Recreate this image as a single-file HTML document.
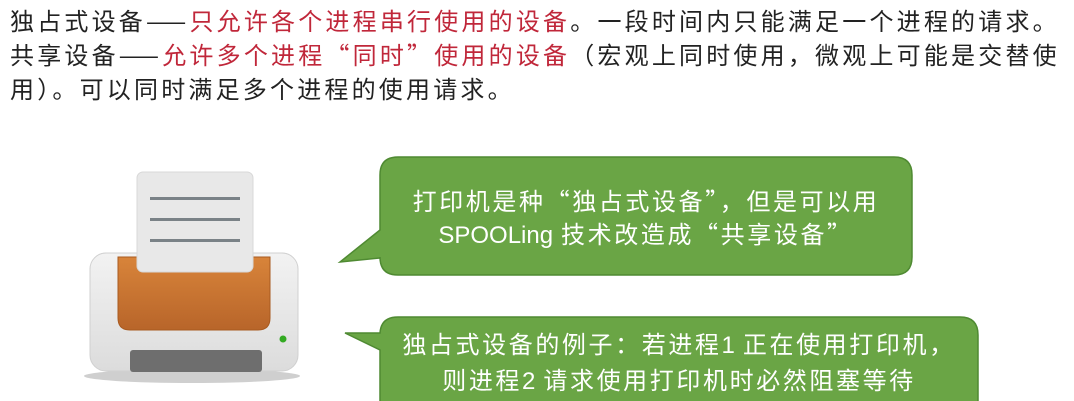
<!DOCTYPE html>
<html><head><meta charset="utf-8"><style>
body{margin:0;width:1074px;height:401px;background:#fff;overflow:hidden;position:relative;font-family:"Noto Sans CJK SC","Liberation Sans",sans-serif;}
.t{position:absolute;left:10px;font-size:24px;letter-spacing:3.2px;color:#222;white-space:nowrap;line-height:34px}
.r{color:#c0273a}
.b{position:absolute;color:#fff;font-size:24px;letter-spacing:2.6px;text-align:center;line-height:33px;white-space:nowrap}
.b span{font-family:"Liberation Sans",sans-serif;letter-spacing:0}
</style></head><body>
<div class="t" style="top:3px">独占式设备——<span class="r">只允许各个进程串行使用的设备</span>。一段时间内只能满足一个进程的请求。</div>
<div class="t" style="top:37px">共享设备——<span class="r">允许多个进程“同时”使用的设备</span>（宏观上同时使用，微观上可能是交替使</div>
<div class="t" style="top:71px">用）。可以同时满足多个进程的使用请求。</div>

<svg width="1074" height="401" style="position:absolute;left:0;top:0">
<defs>
<linearGradient id="bd" x1="0" y1="0" x2="0" y2="1"><stop offset="0" stop-color="#f2f2f2"/><stop offset="1" stop-color="#dcdcdc"/></linearGradient>
<linearGradient id="or" x1="0" y1="0" x2="0" y2="1"><stop offset="0" stop-color="#d8843a"/><stop offset="1" stop-color="#b8652a"/></linearGradient>
</defs>
<ellipse cx="192" cy="376" rx="108" ry="7" fill="#bbb" opacity="0.7"/>
<rect x="90" y="253" width="208" height="118" rx="16" fill="url(#bd)" stroke="#d0d0d0"/>
<path d="M118 257 H270 V318 Q270 330 258 330 H130 Q118 330 118 318 Z" fill="url(#or)" stroke="#a85a20"/>
<rect x="137" y="172" width="116" height="100" rx="6" fill="#e8e8e8" stroke="#d8d8d8"/>
<rect x="150" y="197" width="90" height="3" fill="#7a8287"/>
<rect x="150" y="218" width="90" height="3" fill="#7a8287"/>
<rect x="150" y="239" width="90" height="3" fill="#7a8287"/>
<rect x="130" y="350" width="132" height="22" rx="3" fill="#6e6e6e"/>
<circle cx="283" cy="339" r="3.5" fill="#33aa22"/>
<path d="M398 157 H894 Q912 157 912 175 V257 Q912 275 894 275 H398 Q380 275 380 257 V258 L340 262 L380 230 V175 Q380 157 398 157 Z" fill="#6aa545" stroke="#4f8a32" stroke-width="1.5"/>
<path d="M398 317 H960 Q978 317 978 335 V402 H380 V350 L345 333 L380 333 Q381 317 398 317 Z" fill="#6aa545" stroke="#4f8a32" stroke-width="1.5"/>
</svg>
<div class="b" style="left:380px;width:532px;top:183px">打印机是种“独占式设备”，但是可以用<br><span>SPOOLing</span> 技术改造成“共享设备”</div>
<div class="b" style="left:380px;width:598px;top:326px">独占式设备的例子：若进程<span>1</span> 正在使用打印机，<br>则进程<span>2</span> 请求使用打印机时必然阻塞等待</div>
</body></html>
